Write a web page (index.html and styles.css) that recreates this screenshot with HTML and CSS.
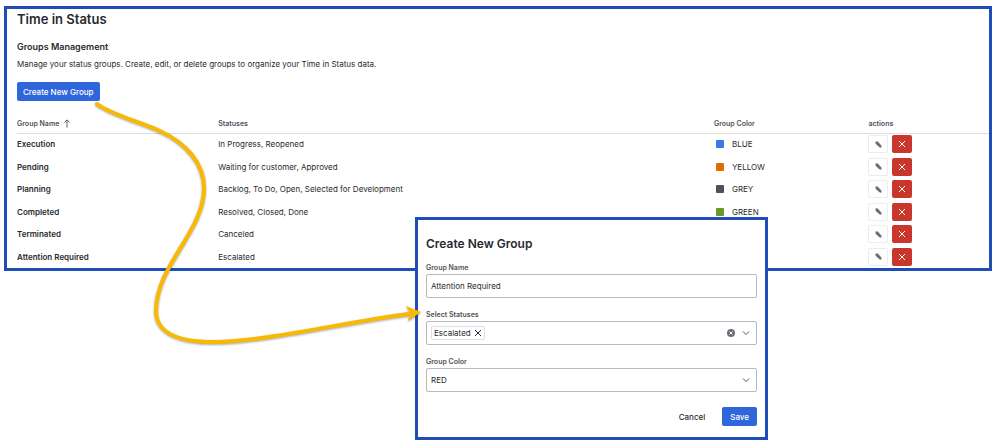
FILE: index.html
```html
<!DOCTYPE html>
<html lang="en">
<head>
  <meta charset="UTF-8">
  <title>Time in Status</title>
  <link rel="stylesheet" href="styles.css">
</head>
<body>
  <svg class="sprite" aria-hidden="true">
    <symbol id="pencil" viewBox="0 0 8 8">
      <path d="M0.8 0.4 L3.2 0.6 L7.2 5 L7.6 7.6 L5 7.1 L0.6 3 Z"/>
    </symbol>
    <symbol id="cross" viewBox="0 0 8 8">
      <path d="M1 1 L7 7 M7 1 L1 7"/>
    </symbol>
    <symbol id="chevron" viewBox="0 0 8 8">
      <path d="M1 2.5 L4 5.5 L7 2.5"/>
    </symbol>
  </svg>

  <main class="panel">
    <h1>Time in Status</h1>
    <h2>Groups Management</h2>
    <p class="intro">Manage your status groups. Create, edit, or delete groups to organize your Time in Status data.</p>
    <button class="btn primary" type="button">Create New Group</button>

    <table class="groups">
      <thead>
        <tr>
          <th class="col-name"><span class="sort">Group Name <svg viewBox="0 0 8 10"><path d="M4 9.5 V1 M1 4 L4 1 L7 4"/></svg></span></th>
          <th class="col-statuses">Statuses</th>
          <th class="col-color">Group Color</th>
          <th>actions</th>
        </tr>
      </thead>
      <tbody>
        <tr>
          <td>Execution</td>
          <td>In Progress, Reopened</td>
          <td><span class="color"><i class="swatch blue"></i>BLUE</span></td>
          <td><div class="actions"><button class="edit" type="button" aria-label="Edit"><svg><use href="#pencil"/></svg></button><button class="delete" type="button" aria-label="Delete"><svg><use href="#cross"/></svg></button></div></td>
        </tr>
        <tr>
          <td>Pending</td>
          <td>Waiting for customer, Approved</td>
          <td><span class="color"><i class="swatch yellow"></i>YELLOW</span></td>
          <td><div class="actions"><button class="edit" type="button" aria-label="Edit"><svg><use href="#pencil"/></svg></button><button class="delete" type="button" aria-label="Delete"><svg><use href="#cross"/></svg></button></div></td>
        </tr>
        <tr>
          <td>Planning</td>
          <td>Backlog, To Do, Open, Selected for Development</td>
          <td><span class="color"><i class="swatch grey"></i>GREY</span></td>
          <td><div class="actions"><button class="edit" type="button" aria-label="Edit"><svg><use href="#pencil"/></svg></button><button class="delete" type="button" aria-label="Delete"><svg><use href="#cross"/></svg></button></div></td>
        </tr>
        <tr>
          <td>Completed</td>
          <td>Resolved, Closed, Done</td>
          <td><span class="color"><i class="swatch green"></i>GREEN</span></td>
          <td><div class="actions"><button class="edit" type="button" aria-label="Edit"><svg><use href="#pencil"/></svg></button><button class="delete" type="button" aria-label="Delete"><svg><use href="#cross"/></svg></button></div></td>
        </tr>
        <tr>
          <td>Terminated</td>
          <td>Canceled</td>
          <td></td>
          <td><div class="actions"><button class="edit" type="button" aria-label="Edit"><svg><use href="#pencil"/></svg></button><button class="delete" type="button" aria-label="Delete"><svg><use href="#cross"/></svg></button></div></td>
        </tr>
        <tr>
          <td>Attention Required</td>
          <td>Escalated</td>
          <td></td>
          <td><div class="actions"><button class="edit" type="button" aria-label="Edit"><svg><use href="#pencil"/></svg></button><button class="delete" type="button" aria-label="Delete"><svg><use href="#cross"/></svg></button></div></td>
        </tr>
      </tbody>
    </table>
  </main>

  <form class="dialog">
    <h3>Create New Group</h3>

    <label for="groupName">Group Name</label>
    <input id="groupName" class="field" type="text" value="Attention Required">

    <label id="statusesLabel">Select Statuses</label>
    <div class="field multi" role="group" aria-labelledby="statusesLabel">
      <span class="tag">Escalated <button type="button" aria-label="Remove Escalated"><svg><use href="#cross"/></svg></button></span>
      <button class="clear" type="button" aria-label="Clear"><svg><use href="#cross"/></svg></button>
      <button class="open" type="button" aria-label="Open"><svg class="chevron"><use href="#chevron"/></svg></button>
    </div>

    <label for="groupColor">Group Color</label>
    <div class="select">
      <select id="groupColor" class="field">
        <option>RED</option>
        <option>BLUE</option>
        <option>YELLOW</option>
        <option>GREY</option>
        <option>GREEN</option>
      </select>
      <svg class="chevron"><use href="#chevron"/></svg>
    </div>

    <div class="buttons">
      <button class="btn" type="button">Cancel</button>
      <button class="btn primary" type="button">Save</button>
    </div>
  </form>

  <!-- arrow from the create button to the dialog -->
  <svg class="arrow" width="430" height="360" viewBox="0 0 430 360" aria-hidden="true">
    <path class="line" d="M97 104 C110 114 140 122 160 131 C186 143 204 163 204 188 C204 232 156 265 156 311 C156 334 181 342 213 342 C270 341 340 323 408 314"/>
    <path class="head" d="M421 312 L406 306 L410 313 L408 321 Z"/>
  </svg>
</body>
</html>
```
FILE: styles.css
```css
* {
  box-sizing: border-box;
}

body {
  margin: 0;
  padding: 6px 6px 4px 4px;
  position: relative;
  background: #fff;
  color: #292a2e;
  font-family: Inter, "Liberation Sans", sans-serif;
  font-size: 8px;
  line-height: 12px;
}

h1, h2, h3, p {
  margin: 0;
}

button, input, select {
  font: inherit;
  color: inherit;
}

button {
  display: inline-flex;
  align-items: center;
  justify-content: center;
  padding: 0;
  border: none;
  background: none;
  cursor: pointer;
}

svg {
  display: block;
  width: 8px;
  height: 8px;
  fill: none;
  stroke: currentColor;
}

.sprite {
  position: absolute;
  width: 0;
  height: 0;
}

.panel {
  border: 3px solid #1f4db8;
  padding-left: 10px;
}

h1 {
  font-size: 13px;
  font-weight: 600;
  line-height: 20px;
}

h2 {
  margin-top: 12px;
  font-size: 9px;
  font-weight: 600;
}

.intro {
  margin: 5px 0 12px;
}

.btn {
  height: 19px;
  padding: 0 6px;
  border-radius: 2px;
  font-weight: 500;
}

.primary {
  background: #2f66dc;
  color: #fff;
}

.groups {
  width: 100%;
  margin-top: 14px;
  border-collapse: collapse;
  table-layout: fixed;
}

.groups th {
  height: 18px;
  padding: 0;
  border-bottom: 1px solid #dcdde0;
  color: #505258;
  font-size: 7px;
  font-weight: 600;
  text-align: left;
}

.col-name {
  width: 20.7%;
}

.col-statuses {
  width: 51%;
}

.col-color {
  width: 15.9%;
}

.sort {
  display: flex;
  align-items: center;
  gap: 4px;
}

.sort svg {
  height: 9px;
}

.groups td {
  height: 22px;
  padding: 0;
}

.groups tr:nth-child(even) td {
  height: 23px;
}

.groups td:first-child {
  font-weight: 600;
}

.color {
  display: flex;
  align-items: center;
  gap: 8px;
  padding-left: 2px;
}

.swatch {
  width: 8px;
  height: 8px;
  border-radius: 1px;
}

.blue {
  background: #357de8;
}

.yellow {
  background: #e06c00;
}

.grey {
  background: #505258;
}

.green {
  background: #6a9a23;
}

.actions {
  display: flex;
  gap: 4px;
}

.actions button {
  width: 20px;
  height: 18px;
  border-radius: 2px;
}

.edit {
  border: 1px solid #ebecee;
}

.edit svg {
  width: 7px;
  height: 7px;
  fill: #6b6e76;
  stroke: none;
}

.delete {
  background: #c9372c;
  color: #fff;
}

/* sits over the lower edge of the panel */
.dialog {
  position: relative;
  width: 353px;
  margin: -54px 0 0 411px;
  padding: 16px 8px 11px;
  border: 3px solid #1f4db8;
  background: #fff;
}

.dialog h3 {
  margin-bottom: 10px;
  font-size: 12px;
  font-weight: 600;
  line-height: 16px;
}

.dialog label {
  display: block;
  color: #505258;
  font-size: 7px;
  font-weight: 600;
}

.field {
  display: block;
  width: 100%;
  height: 24px;
  margin-bottom: 11px;
  padding: 0 4px;
  border: 1px solid #b7b9be;
  border-radius: 2px;
  background: #fff;
}

.multi {
  display: flex;
  align-items: center;
  gap: 7px;
  padding-right: 6px;
}

.tag {
  display: flex;
  align-items: center;
  gap: 3px;
  height: 14px;
  margin-right: auto;
  padding: 0 2px;
  border: 1px solid #dddee1;
  border-radius: 2px;
}

.clear {
  width: 8px;
  height: 8px;
  border-radius: 50%;
  background: #6b6e76;
  color: #fff;
}

.clear svg {
  width: 4px;
  height: 4px;
  stroke-width: 2;
}

.select {
  position: relative;
}

.select select {
  appearance: none;
}

.chevron {
  color: #505258;
}

.select .chevron {
  position: absolute;
  top: 8px;
  right: 7px;
  pointer-events: none;
}

.buttons {
  display: flex;
  justify-content: flex-end;
  gap: 9px;
  margin-top: 15px;
}

.buttons .btn {
  padding: 0 8px;
}

.arrow {
  position: absolute;
  top: 0;
  left: 0;
  width: 430px;
  height: 360px;
  pointer-events: none;
  filter: drop-shadow(0 1px 1px rgba(0, 0, 0, 0.35));
}

.line {
  stroke: #f8b900;
  stroke-width: 4;
  stroke-linecap: round;
}

.head {
  fill: #f8b900;
  stroke: none;
}
```
